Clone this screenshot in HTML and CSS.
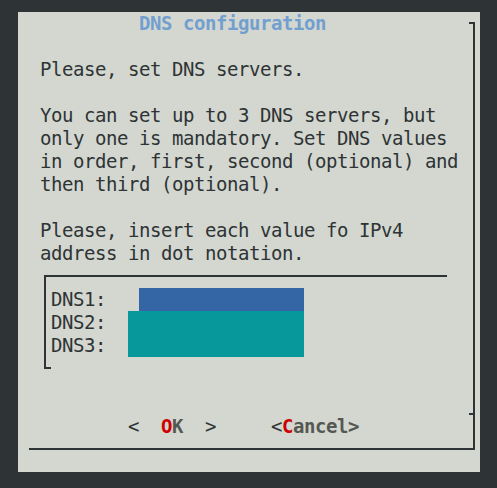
FILE: index.html
```html
<!DOCTYPE html>
<html>
<head>
<meta charset="utf-8">
<link rel="stylesheet" href="styles.css">
</head>
<body>
<div class="dialog">
  <div class="frame">
    <div class="title">DNS configuration</div>
    <div class="msg">Please, set DNS servers.

You can set up to 3 DNS servers, but
only one is mandatory. Set DNS values
in order, first, second (optional) and
then third (optional).

Please, insert each value fo IPv4
address in dot notation.</div>
    <div class="box">
      <div class="row"><span class="label">DNS1:</span><span class="field field-active"></span></div>
      <div class="row"><span class="label">DNS2:</span><span class="field"></span></div>
      <div class="row"><span class="label">DNS3:</span><span class="field"></span></div>
    </div>
    <div class="buttons"><span class="br">&lt;  </span><span class="hot">O</span><span class="lbl">K</span><span class="br">  &gt;</span>     <span class="br">&lt;</span><span class="hot">C</span><span class="lbl">ancel&gt;</span></div>
  </div>
</div>
</body>
</html>
```
FILE: styles.css
```css
html, body {
  margin: 0;
  padding: 0;
  background: #2e3436;
}
body {
  padding: 12px 0 0 18px;
  font-family: "DejaVu Sans Mono", monospace;
  font-size: 19px;
  letter-spacing: -0.44px;
  line-height: 23px;
  color: #2e3436;
}
.dialog {
  width: 462px;
  height: 460px;
  box-sizing: border-box;
  background: #d3d7cf;
  padding-top: 10px;
  padding-left: 11px;
}
.frame {
  display: flow-root;
  position: relative;
  width: 446px;
  box-sizing: border-box;
  border-right: 2px solid #2e3436;
  border-bottom: 2px solid #2e3436;
  padding-bottom: 10px;
}
.frame::before,
.frame::after {
  content: "";
  position: absolute;
  right: -2px;
  width: 6px;
  height: 2px;
  background: #2e3436;
}
.frame::before { top: 0; }
.frame::after { top: 391px; }
.title {
  margin-top: -10px;
  padding-left: 110px;
  height: 23px;
  font-weight: bold;
  color: #729fcf;
  white-space: pre;
}
.msg {
  margin-top: 23px;
  padding-left: 11px;
  white-space: pre;
  height: 207px;
}
.box {
  position: relative;
  margin: 10px 0 11px 15px;
  width: 403px;
  box-sizing: border-box;
  border-top: 2px solid #2e3436;
  border-left: 2px solid #2e3436;
  padding: 11px 0 12px 5px;
}
.box::after {
  content: "";
  position: absolute;
  left: -2px;
  bottom: 0;
  width: 7px;
  height: 2px;
  background: #2e3436;
}
.row {
  display: flex;
  height: 23px;
}
.label {
  width: 77px;
  flex: none;
  white-space: pre;
}
.field {
  width: 176px;
  height: 23px;
  background: #06989a;
}
.field-active {
  margin-left: 11px;
  width: 165px;
  background: #3465a4;
}
.buttons {
  margin-top: 46px;
  padding-left: 99px;
  height: 23px;
  white-space: pre;
}
.br { color: #2e3436; }
.hot { color: #cc0000; font-weight: bold; }
.lbl { color: #555753; font-weight: bold; }
```
